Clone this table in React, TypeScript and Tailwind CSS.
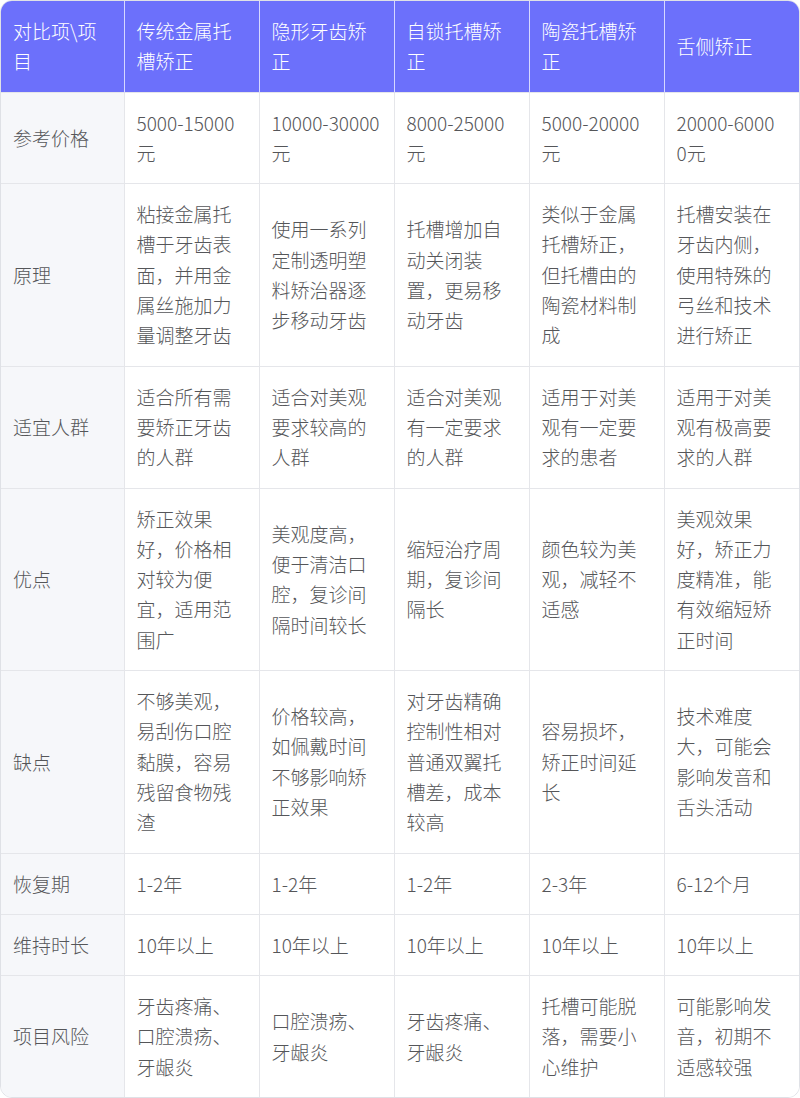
import React from 'react';

const headers = ['对比项\\项目', '传统金属托槽矫正', '隐形牙齿矫正', '自锁托槽矫正', '陶瓷托槽矫正', '舌侧矫正'];

const rows: string[][] = [
  ['参考价格', '5000-15000元', '10000-30000元', '8000-25000元', '5000-20000元', '20000-60000元'],
  ['原理', '粘接金属托槽于牙齿表面，并用金属丝施加力量调整牙齿', '使用一系列定制透明塑料矫治器逐步移动牙齿', '托槽增加自动关闭装置，更易移动牙齿', '类似于金属托槽矫正，但托槽由的陶瓷材料制成', '托槽安装在牙齿内侧，使用特殊的弓丝和技术进行矫正'],
  ['适宜人群', '适合所有需要矫正牙齿的人群', '适合对美观要求较高的人群', '适合对美观有一定要求的人群', '适用于对美观有一定要求的患者', '适用于对美观有极高要求的人群'],
  ['优点', '矫正效果好，价格相对较为便宜，适用范围广', '美观度高，便于清洁口腔，复诊间隔时间较长', '缩短治疗周期，复诊间隔长', '颜色较为美观，减轻不适感', '美观效果好，矫正力度精准，能有效缩短矫正时间'],
  ['缺点', '不够美观，易刮伤口腔黏膜，容易残留食物残渣', '价格较高，如佩戴时间不够影响矫正效果', '对牙齿精确控制性相对普通双翼托槽差，成本较高', '容易损坏，矫正时间延长', '技术难度大，可能会影响发音和舌头活动'],
  ['恢复期', '1-2年', '1-2年', '1-2年', '2-3年', '6-12个月'],
  ['维持时长', '10年以上', '10年以上', '10年以上', '10年以上', '10年以上'],
  ['项目风险', '牙齿疼痛、口腔溃疡、牙龈炎', '口腔溃疡、牙龈炎', '牙齿疼痛、牙龈炎', '托槽可能脱落，需要小心维护', '可能影响发音，初期不适感较强'],
];

export default function App() {
  return (
    <div className="w-[800px] bg-white font-['Noto_Sans_CJK_SC','Noto_Sans',sans-serif]">
      <div className="overflow-hidden rounded-xl border border-[#dfe1e6]">
        <table className="w-full table-fixed border-collapse text-[19px] leading-[30.3px] font-light">
          <colgroup>
            <col className="w-[123px]" />
            <col className="w-[135px]" />
            <col className="w-[135px]" />
            <col className="w-[135px]" />
            <col className="w-[135px]" />
            <col />
          </colgroup>
          <thead>
            <tr className="bg-[#6c70fb] text-white">
              {headers.map((h, i) => (
                <th
                  key={i}
                  className={`break-all py-[15px] pl-3 text-left align-middle font-light ${i === 5 ? 'pr-[17px]' : 'pr-[13px]'} ${i > 0 ? 'border-l border-[#d6d8ff]' : ''}`}
                >
                  {h}
                </th>
              ))}
            </tr>
          </thead>
          <tbody>
            {rows.map((r, ri) => (
              <tr key={ri} className="border-t border-[#e5e6ea]">
                {r.map((c, ci) => (
                  <td
                    key={ci}
                    className={`break-all py-[15px] pl-3 align-middle text-[#555659] ${ci === 5 ? 'pr-[17px]' : 'pr-[13px]'} ${ci === 0 ? 'bg-[#f6f7fa]' : 'border-l border-[#e5e6ea] bg-white'}`}
                  >
                    {c}
                  </td>
                ))}
              </tr>
            ))}
          </tbody>
        </table>
      </div>
    </div>
  );
}
